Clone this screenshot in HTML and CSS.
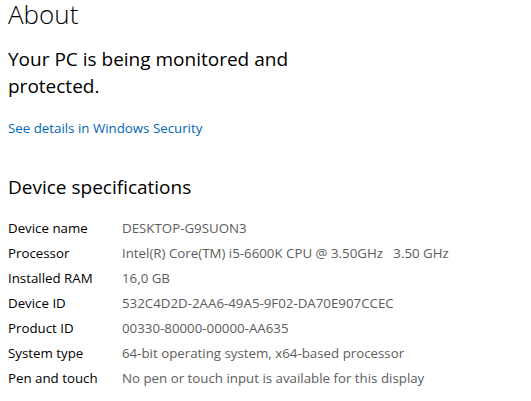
FILE: index.html
```html
<!DOCTYPE html>
<html>
<head>
<meta charset="utf-8">
<link rel="stylesheet" href="styles.css">
</head>
<body>
<main class="page">
  <h1 class="title">About</h1>
  <p class="status">Your PC is being monitored and protected.</p>
  <a class="link" href="#">See details in Windows Security</a>
  <h2 class="section">Device specifications</h2>
  <dl class="specs">
    <div class="row"><dt>Device name</dt><dd>DESKTOP-G9SUON3</dd></div>
    <div class="row"><dt>Processor</dt><dd>Intel(R) Core(TM) i5-6600K CPU @ 3.50GHz&nbsp;&nbsp;&nbsp;3.50 GHz</dd></div>
    <div class="row"><dt>Installed RAM</dt><dd>16,0 GB</dd></div>
    <div class="row"><dt>Device ID</dt><dd>532C4D2D-2AA6-49A5-9F02-DA70E907CCEC</dd></div>
    <div class="row"><dt>Product ID</dt><dd>00330-80000-00000-AA635</dd></div>
    <div class="row"><dt>System type</dt><dd>64-bit operating system, x64-based processor</dd></div>
    <div class="row"><dt>Pen and touch</dt><dd>No pen or touch input is available for this display</dd></div>
  </dl>
</main>
</body>
</html>
```
FILE: styles.css
```css
html, body {
  margin: 0;
  padding: 0;
  background: #ffffff;
}
body {
  font-family: "Open Sans", "Noto Sans", sans-serif;
  color: #000000;
}
.page {
  padding: 0 8px;
  display: flex;
  flex-direction: column;
  align-items: flex-start;
}
.title {
  margin: 0;
  font-size: 26px;
  font-weight: 300;
  line-height: 28px;
}
.status {
  margin: 18px 0 0 0;
  font-size: 19px;
  font-weight: 400;
  line-height: 27px;
  width: 290px;
}
.link {
  margin-top: 19px;
  font-size: 13.3px;
  line-height: 18px;
  color: #0067b8;
  text-decoration: none;
}
.section {
  margin: 37px 0 0 0;
  font-size: 19px;
  font-weight: 400;
  line-height: 26px;
}
.specs {
  margin: 15px 0 0 0;
  display: flex;
  flex-direction: column;
}
.row {
  display: grid;
  grid-template-columns: 114px auto;
  height: 25px;
  align-items: center;
  font-size: 13.3px;
}
.row dt {
  color: #000000;
}
.row dd {
  margin: 0;
  color: #5d5d5d;
}
```
